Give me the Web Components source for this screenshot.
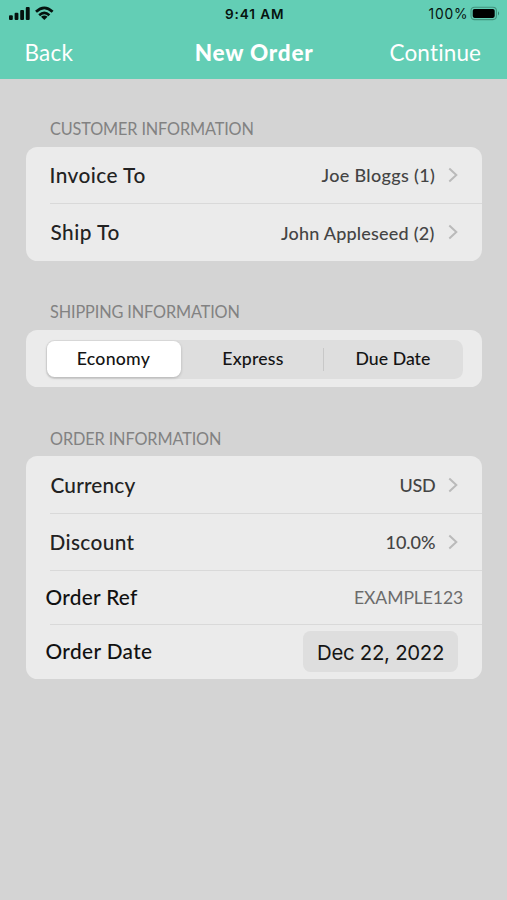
<!DOCTYPE html>
<html lang="en">
<head>
<meta charset="utf-8">
<title>New Order</title>
<style>
html,body{margin:0;height:100%}
body{background:#d4d4d4;overflow:hidden;font-family:Lato,"Open Sans",sans-serif}
</style>
</head>
<body>
<order-screen></order-screen>
<script>
function define(name, html, ready){
  const t=document.createElement('template');
  t.innerHTML=html;
  customElements.define(name, class extends HTMLElement{
    constructor(){super();this.attachShadow({mode:'open'}).append(t.content.cloneNode(true));}
    connectedCallback(){if(ready)ready(this,this.shadowRoot);}
  });
}

// Label tracked out so its ink fills the width given in the "w" attribute.
const pen=document.createElement('canvas').getContext('2d');
define('tracked-text', `<style>:host{display:block;white-space:pre;flex:none}span{display:block;width:max-content}</style><span><slot></slot></span>`, (el,root)=>{
  const cs=getComputedStyle(el), s=el.textContent, w=+el.getAttribute('w');
  pen.font=cs.fontWeight+' '+cs.fontSize+' '+cs.fontFamily;
  const m=pen.measureText(s);
  const ls=(w-m.actualBoundingBoxLeft-m.actualBoundingBoxRight)/(s.length-1);
  el.style.width=w+'px';
  const span=root.querySelector('span');
  span.style.letterSpacing=ls+'px';
  span.style.marginLeft=m.actualBoundingBoxLeft+'px';
});

define('status-bar', `<style>
:host{display:grid;grid-template-columns:1fr auto 1fr;align-items:center;height:27px;padding:0 7px 0 8px;box-sizing:border-box;color:#06130f;font-family:Inter,sans-serif}
.l,.r{display:flex;align-items:center}.r{justify-content:flex-end;gap:4px}
svg{display:block}.l{gap:5px}
.t{font-size:13.6px;font-weight:600}.p{font-size:13.8px;font-weight:400}
.r{margin-right:-1px}
</style>
<div class="l">
<svg width="22" height="15" viewBox="0 0 22 15" fill="#05120e"><rect x="1" y="9.2" width="3.8" height="4.8" rx="1"/><rect x="6.6" y="6.8" width="3.8" height="7.2" rx="1"/><rect x="12.2" y="4" width="3.8" height="10" rx="1"/><rect x="17.8" y="1" width="3.9" height="13" rx="1"/></svg>
<svg width="19" height="15" viewBox="0 0 19 15" fill="none" stroke="#05120e" stroke-width="2.7"><path d="M1 5.8Q9.3-2.2 17.6 5.8"/><path d="M4.2 9.2Q9.3 4.6 14.4 9.2"/><path d="M9.3 14 6 10.7Q9.3 8.1 12.6 10.7Z" fill="#05120e" stroke="none"/></svg>
</div>
<tracked-text class="t" w="58">9:41 AM</tracked-text>
<div class="r"><tracked-text class="p" w="37.5">100%</tracked-text>
<svg width="31" height="15" viewBox="0 0 31 15"><rect x="1" y="1.2" width="25.4" height="12.4" rx="3.5" fill="none" stroke="#41937d" stroke-width="1.1"/><rect x="2.7" y="2.9" width="22" height="9" rx="1.8" fill="#000"/><path d="M28 5.2q2.2 2.2 0 4.4z" fill="#34856f"/></svg></div>`);

define('nav-bar', `<style>
:host{display:flex;justify-content:space-between;align-items:center;height:52px;padding:0 25.5px 0 26.5px;box-sizing:border-box;color:#fff;font-size:22.5px;line-height:26px}
b{display:block;font-weight:900;margin-left:78px;margin-right:32.5px}
</style><tracked-text w="47">Back</tracked-text><b><tracked-text w="118">New Order</tracked-text></b><tracked-text w="91">Continue</tracked-text>`);

define('form-section', `<style>
:host{display:block}
.h{height:19px;padding-left:24.5px;box-sizing:border-box;font-size:16.3px;line-height:19px;color:#828282;margin-bottom:8.5px}
.c{background:#ebebeb;border-radius:11.5px;overflow:hidden}
</style><div class="h"><slot name="title"></slot></div><div class="c"><slot></slot></div>`);

define('form-row', `<style>
:host{display:flex;align-items:center;justify-content:space-between;height:57.3px;box-sizing:border-box;padding:0 24px 0 25px;color:#222;font-size:20.8px;line-height:26px;
background:linear-gradient(#d9d9d9,#d9d9d9) 24px 100%/100% 1px no-repeat}
:host([last]){background:none}
:host([plain]){padding-left:20px;padding-right:19px;height:54px;color:#111}
.name{display:block;margin-bottom:.5px}
:host([plain]) .name{margin-bottom:2px}
.v{display:flex;align-items:center;gap:13px;font-size:18px;color:#444}
.t{display:block;margin-top:0}
svg{display:none;margin-top:-1px}
:host([link]) svg{display:block}
:host([plain]) .v{color:#6b6b6b;font-size:17.6px}
</style><div class="name"><slot name="name"></slot></div><div class="v"><div class="t"><slot></slot></div><svg width="10" height="16" viewBox="0 0 10 16" fill="none" stroke="#bababa" stroke-width="2"><path d="m1.3 1.6 7 6.4-7 6.4"/></svg></div>`);

define('segment-control', `<style>
:host{display:flex;height:57.5px;box-sizing:border-box;padding:10px 19px 8.5px 20px}
.track{flex:1;display:grid;grid-template-columns:138px 139px 1fr;background:#dedede;border-radius:8.5px;font-size:17.7px;line-height:22px;color:#141414}
.s{display:flex;align-items:center;justify-content:center;padding:0 0 1px 1px}
.on{background:#fff;border-radius:7.5px;margin:1.5px 3px 1.5px 1.5px;box-shadow:0 1px 3px #0003}
.d{background:linear-gradient(#c8c8c8,#c8c8c8) 0 50%/1px 23px no-repeat}
</style><div class="track"><div class="s on"><slot name="a"></slot></div><div class="s"><slot name="b"></slot></div><div class="s d"><slot name="c"></slot></div></div>`);

define('date-chip', `<style>
:host{display:flex;align-items:center;justify-content:center;width:155px;height:41px;padding:2px 0 0 1px;box-sizing:border-box;border-radius:7.5px;background:#dedede;color:#151515;font:400 20.4px/24px Inter,sans-serif;margin-right:5.5px}
</style><slot></slot>`);

define('order-screen', `<style>
:host{display:block;height:900px;background:#d4d4d4}
header{background:#63ceb5;height:79px}
main{display:flex;flex-direction:column;padding:40.3px 25px 0 25.5px}
.medium{font-weight:500}
.ship{margin-top:41px}.order{margin-top:41.5px}
</style>
<header><status-bar></status-bar><nav-bar></nav-bar></header>
<main>
<form-section><tracked-text slot="title" w="202.5">CUSTOMER INFORMATION</tracked-text>
<form-row link><tracked-text class="medium" slot="name" w="94.5">Invoice To</tracked-text><tracked-text class="medium" w="113.5">Joe Bloggs (1)</tracked-text></form-row>
<form-row link last><tracked-text class="medium" slot="name" w="68.5">Ship To</tracked-text><tracked-text class="medium" w="154">John Appleseed (2)</tracked-text></form-row></form-section>
<form-section class="ship"><tracked-text slot="title" w="188.5">SHIPPING INFORMATION</tracked-text>
<segment-control class="medium"><tracked-text slot="a" w="73">Economy</tracked-text><tracked-text slot="b" w="60.5">Express</tracked-text><tracked-text slot="c" w="73.5">Due Date</tracked-text></segment-control></form-section>
<form-section class="order"><tracked-text slot="title" w="170">ORDER INFORMATION</tracked-text>
<form-row link><tracked-text class="medium" slot="name" w="85">Currency</tracked-text><tracked-text class="medium" w="34.5">USD</tracked-text></form-row>
<form-row link><tracked-text class="medium" slot="name" w="84">Discount</tracked-text><tracked-text class="medium" w="48.5">10.0%</tracked-text></form-row>
<form-row plain><tracked-text class="medium" slot="name" w="93">Order Ref</tracked-text><tracked-text w="108">EXAMPLE123</tracked-text></form-row>
<form-row plain last><tracked-text class="medium" slot="name" w="107">Order Date</tracked-text><date-chip><tracked-text w="125">Dec 22, 2022</tracked-text></date-chip></form-row></form-section>
</main>`);
</script>
</body>
</html>
